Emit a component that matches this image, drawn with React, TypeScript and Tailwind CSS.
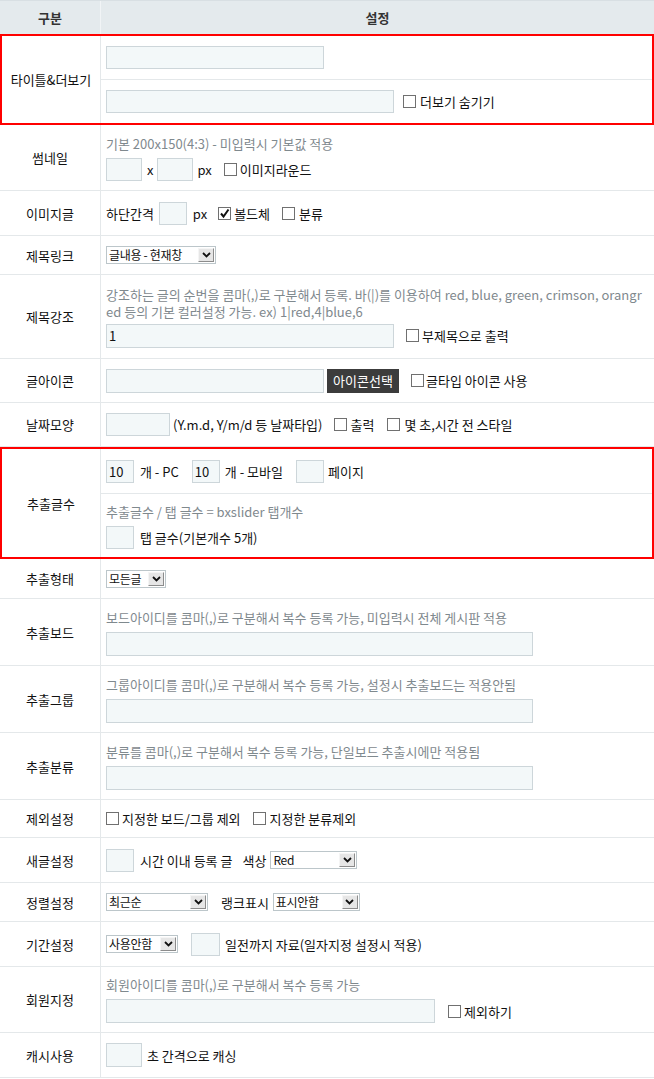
import type { ReactNode } from 'react';

function Input({ w, h = 'h-[23px]', value }: { w: string; h?: string; value?: string }) {
	return (
		<div className={`${w} ${h} flex items-center border border-[#cdd6da] bg-[#f3f8f9] pl-[2px] text-[#111]`}>
			{value}
		</div>
	);
}

function Check({ checked = false }: { checked?: boolean }) {
	return (
		<span className="flex h-[13px] w-[13px] shrink-0 items-center justify-center border border-[#707070] bg-white">
			{checked && (
				<svg width="11" height="11" viewBox="0 0 11 11">
					<path d="M2 5.5 L4.5 8.5 L9.5 1.5" fill="none" stroke="#111" strokeWidth="2" />
				</svg>
			)}
		</span>
	);
}

function Select({ w, text }: { w: string; text: string }) {
	return (
		<div className={`${w} flex h-[18px] items-center border border-[#bcc6ca] bg-white`}>
			<span className="flex-1 whitespace-nowrap pl-[2px] text-[12px] leading-[16px] tracking-[-0.3px] text-[#111]">{text}</span>
			<span className="mr-px flex h-[14px] w-[16px] shrink-0 items-center justify-center border border-t-[#f5f5f5] border-l-[#f5f5f5] border-r-[#8c8c8c] border-b-[#8c8c8c] bg-[#e6e6e6]">
				<svg width="9" height="6" viewBox="0 0 9 6">
					<path d="M1 1 L4.5 4.5 L8 1" fill="none" stroke="#111" strokeWidth="1.8" />
				</svg>
			</span>
		</div>
	);
}

function Help({ children }: { children: ReactNode }) {
	return <div className="whitespace-nowrap text-[#7f898e]">{children}</div>;
}

function Row({ label, h, children, gap = 'gap-[6px]' }: { label: string; h: string; children: ReactNode; gap?: string }) {
	return (
		<div className={`grid grid-cols-[101px_1fr] border-b border-[#e4e8ea] ${h}`}>
			<div className="flex items-center justify-center border-r border-[#e4e8ea] text-[#111]">{label}</div>
			<div className={`flex min-w-0 flex-col justify-center pl-[5px] ${gap}`}>{children}</div>
		</div>
	);
}

function Line({ children }: { children: ReactNode }) {
	return <div className="flex items-center whitespace-nowrap text-[#111]">{children}</div>;
}

export default function App() {
	return (
		<div className="w-[654px] overflow-hidden bg-white font-['Noto_Sans_CJK_KR',sans-serif] text-[13px] leading-[17px]">
			{/* header */}
			<div className="grid h-[34px] grid-cols-[101px_1fr] border-t border-[#d8dfe3] bg-[#e4eaed] font-bold text-[#333]">
				<div className="flex items-center justify-center border-r border-[#f1f4f6]">구분</div>
				<div className="flex items-center justify-center">설정</div>
			</div>

			{/* 타이틀&더보기 */}
			<div className="grid h-[91px] grid-cols-[99px_1fr] border-2 border-[#ff0000]">
				<div className="flex items-center justify-center border-r border-[#e4e8ea] text-[#111]">타이틀&amp;더보기</div>
				<div className="flex flex-col">
					<div className="flex h-[44px] items-center border-b border-[#e4e8ea] pl-[5px]">
						<Input w="w-[218px]" />
					</div>
					<div className="flex h-[43px] items-center pl-[5px] text-[#111]">
						<Input w="w-[288px]" />
						<span className="ml-[9px]"><Check /></span>
						<span className="ml-[4px]">더보기 숨기기</span>
					</div>
				</div>
			</div>

			<Row label="썸네일" h="h-[66px]">
				<Help>기본 200x150(4:3) - 미입력시 기본값 적용</Help>
				<Line>
					<Input w="w-[36px]" />
					<span className="ml-[5px]">x</span>
					<span className="ml-[4px]"><Input w="w-[36px]" /></span>
					<span className="ml-[4px]">px</span>
					<span className="ml-[12px]"><Check /></span>
					<span className="ml-[3px]">이미지라운드</span>
				</Line>
			</Row>

			<Row label="이미지글" h="h-[45px]">
				<Line>
					<span>하단간격</span>
					<span className="ml-[5px]"><Input w="w-[28px]" /></span>
					<span className="ml-[6px]">px</span>
					<span className="ml-[11px]"><Check checked /></span>
					<span className="ml-[3px]">볼드체</span>
					<span className="ml-[12px]"><Check /></span>
					<span className="ml-[4px]">분류</span>
				</Line>
			</Row>

			<Row label="제목링크" h="h-[39px]">
				<Line>
					<Select w="w-[110px]" text="글내용 - 현재창" />
				</Line>
			</Row>

			<Row label="제목강조" h="h-[84px]" gap="gap-[4px]">
				<Help>
					강조하는 글의 순번을 콤마(,)로 구분해서 등록. 바(|)를 이용하여 red, blue, green, crimson, orangr
					<br />
					ed 등의 기본 컬러설정 가능. ex) 1|red,4|blue,6
				</Help>
				<Line>
					<Input w="w-[288px]" h="h-[24px]" value="1" />
					<span className="ml-[12px]"><Check /></span>
					<span className="ml-[3px]">부제목으로 출력</span>
				</Line>
			</Row>

			<Row label="글아이콘" h="h-[44px]">
				<Line>
					<Input w="w-[218px]" h="h-[24px]" />
					<span className="ml-[3px] flex h-[24px] w-[72px] items-center justify-center bg-[#3c3c3c] text-white">아이콘선택</span>
					<span className="ml-[12px]"><Check /></span>
					<span className="ml-[2px]">글타입 아이콘 사용</span>
				</Line>
			</Row>

			<Row label="날짜모양" h="h-[44px]">
				<Line>
					<Input w="w-[64px]" />
					<span className="ml-[3px]">(Y.m.d, Y/m/d 등 날짜타입)</span>
					<span className="ml-[12px]"><Check /></span>
					<span className="ml-[3px]">출력</span>
					<span className="ml-[13px]"><Check /></span>
					<span className="ml-[4px]">몇 초,시간 전 스타일</span>
				</Line>
			</Row>

			{/* 추출글수 */}
			<div className="grid h-[112px] grid-cols-[99px_1fr] border-2 border-[#ff0000]">
				<div className="flex items-center justify-center border-r border-[#e4e8ea] text-[#111]">추출글수</div>
				<div className="flex flex-col">
					<div className="flex h-[45px] items-center whitespace-nowrap border-b border-[#e4e8ea] pl-[5px] text-[#111]">
						<Input w="w-[28px]" value="10" />
						<span className="ml-[6px]">개 - PC</span>
						<span className="ml-[13px]"><Input w="w-[28px]" value="10" /></span>
						<span className="ml-[5px]">개 - 모바일</span>
						<span className="ml-[13px]"><Input w="w-[28px]" /></span>
						<span className="ml-[4px]">페이지</span>
					</div>
					<div className="flex h-[63px] flex-col justify-center gap-[6px] pl-[5px]">
						<Help>추출글수 / 탭 글수 = bxslider 탭개수</Help>
						<Line>
							<Input w="w-[28px]" />
							<span className="ml-[6px]">탭 글수(기본개수 5개)</span>
						</Line>
					</div>
				</div>
			</div>

			<Row label="추출형태" h="h-[40px]">
				<Line>
					<Select w="w-[60px]" text="모든글" />
				</Line>
			</Row>

			<Row label="추출보드" h="h-[67px]">
				<Help>보드아이디를 콤마(,)로 구분해서 복수 등록 가능, 미입력시 전체 게시판 적용</Help>
				<Input w="w-[427px]" h="h-[24px]" />
			</Row>

			<Row label="추출그룹" h="h-[67px]">
				<Help>그룹아이디를 콤마(,)로 구분해서 복수 등록 가능, 설정시 추출보드는 적용안됨</Help>
				<Input w="w-[427px]" h="h-[24px]" />
			</Row>

			<Row label="추출분류" h="h-[67px]">
				<Help>분류를 콤마(,)로 구분해서 복수 등록 가능, 단일보드 추출시에만 적용됨</Help>
				<Input w="w-[427px]" h="h-[24px]" />
			</Row>

			<Row label="제외설정" h="h-[38px]">
				<Line>
					<Check />
					<span className="ml-[3px]">지정한 보드/그룹 제외</span>
					<span className="ml-[12px]"><Check /></span>
					<span className="ml-[4px]">지정한 분류제외</span>
				</Line>
			</Row>

			<Row label="새글설정" h="h-[45px]">
				<Line>
					<Input w="w-[28px]" />
					<span className="ml-[6px]">시간 이내 등록 글</span>
					<span className="ml-[10px]">색상</span>
					<span className="ml-[4px]"><Select w="w-[87px]" text="Red" /></span>
				</Line>
			</Row>

			<Row label="정렬설정" h="h-[39px]">
				<Line>
					<Select w="w-[102px]" text="최근순" />
					<span className="ml-[13px]">랭크표시</span>
					<span className="ml-[4px]"><Select w="w-[87px]" text="표시안함" /></span>
				</Line>
			</Row>

			<Row label="기간설정" h="h-[45px]">
				<Line>
					<Select w="w-[72px]" text="사용안함" />
					<span className="ml-[13px]"><Input w="w-[29px]" /></span>
					<span className="ml-[5px]">일전까지 자료(일자지정 설정시 적용)</span>
				</Line>
			</Row>

			<Row label="회원지정" h="h-[66px]">
				<Help>회원아이디를 콤마(,)로 구분해서 복수 등록 가능</Help>
				<Line>
					<Input w="w-[329px]" h="h-[24px]" />
					<span className="ml-[13px]"><Check /></span>
					<span className="ml-[3px]">제외하기</span>
				</Line>
			</Row>

			<Row label="캐시사용" h="h-[45px]">
				<Line>
					<Input w="w-[36px]" h="h-[24px]" />
					<span className="ml-[5px]">초 간격으로 캐싱</span>
				</Line>
			</Row>
		</div>
	);
}
